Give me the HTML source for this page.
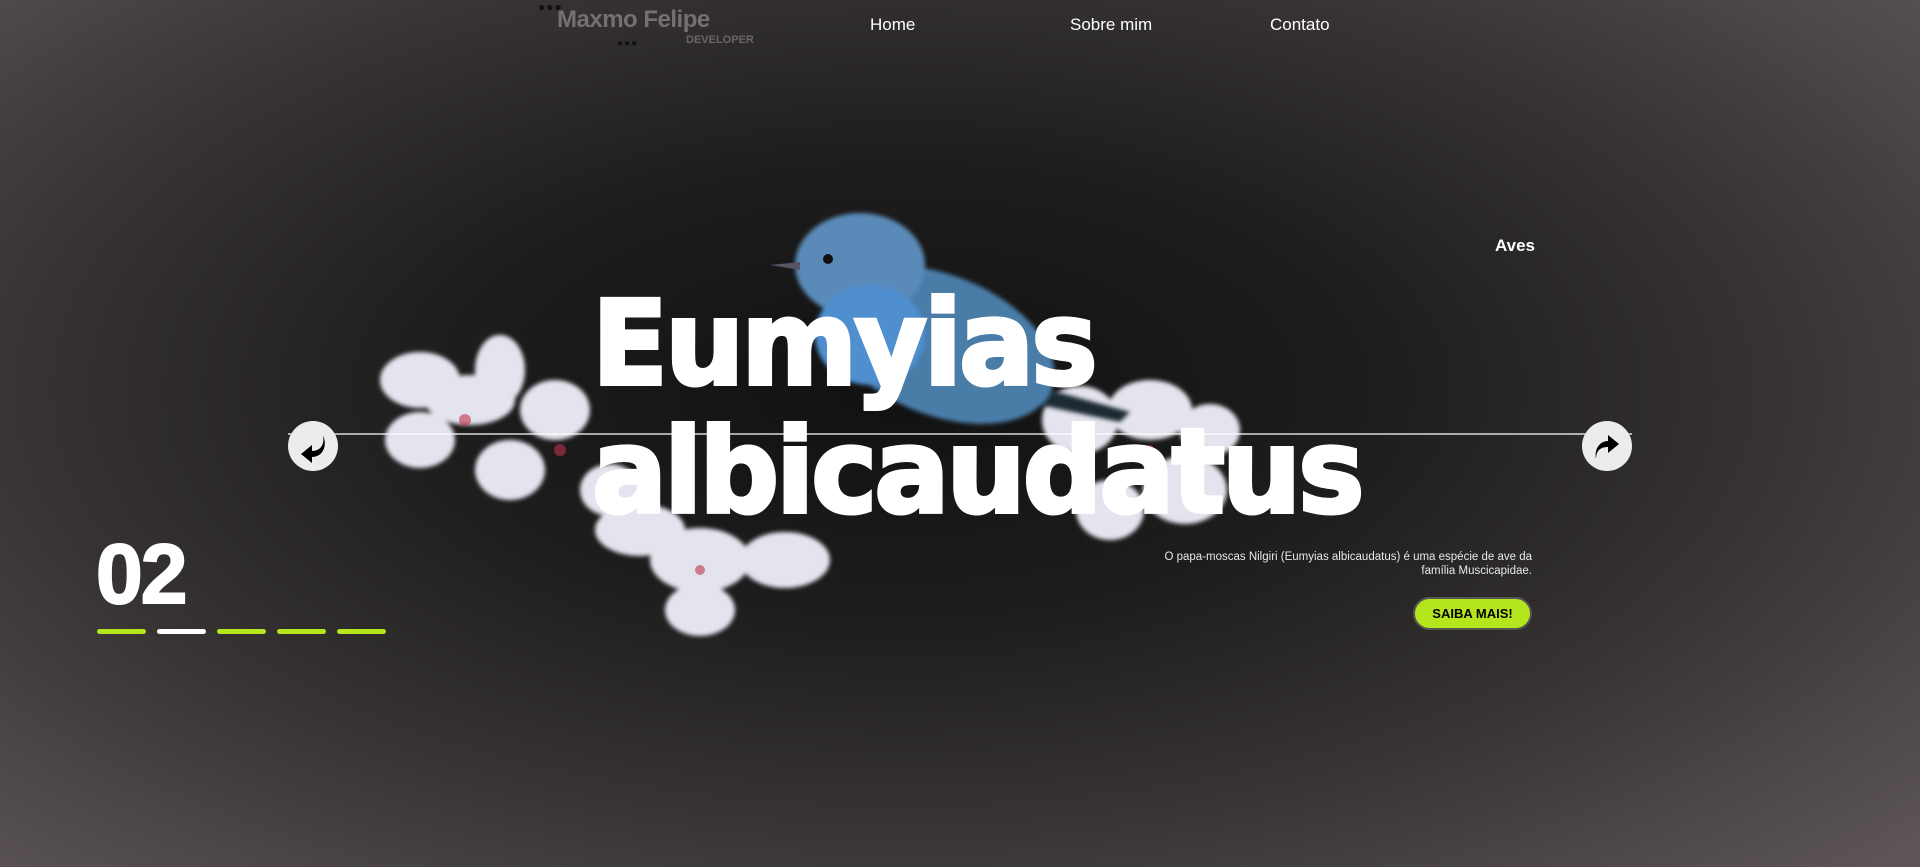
<!DOCTYPE html>
<html><head><meta charset="utf-8"><style>
*{margin:0;padding:0;box-sizing:border-box}
html,body{width:1920px;height:867px;overflow:hidden}
body{position:relative;font-family:"Liberation Sans","DejaVu Sans",sans-serif;
background:radial-gradient(ellipse 72% 78% at 47% 45%,#111 0%,#1f1d1d 35%,#383434 65%,#5d5557 100%);color:#fff}
.a{position:absolute}
.nav{top:15px;font-size:17px;color:#fff}
.logo{left:557px;top:6px;font-size:24px;font-weight:bold;color:#747070;letter-spacing:-0.5px}
.dev{left:686px;top:34px;font-size:11px;font-weight:bold;color:#6a6666}
.title{left:592px;top:280px;font-size:117px;line-height:128px;letter-spacing:-3px;transform:scaleX(0.95);transform-origin:left top;white-space:nowrap;font-family:"DejaVu Sans","Liberation Sans",sans-serif;font-weight:bold;-webkit-text-stroke:4px #fff}
.circ{width:50px;height:50px;border-radius:50%;background:#ececec}
.bar{top:629px;width:49px;height:5px;border-radius:3px;background:#b5e61d}
</style></head><body>
<svg class="a" style="left:0;top:0" width="1920" height="867">
<defs><filter id="b"><feGaussianBlur stdDeviation="2"/></filter></defs>
<g filter="url(#b)" fill="#e4e4ee">
<ellipse cx="420" cy="380" rx="40" ry="28"/><ellipse cx="470" cy="400" rx="45" ry="25"/><ellipse cx="420" cy="440" rx="35" ry="28"/>
<ellipse cx="500" cy="370" rx="25" ry="35"/><ellipse cx="555" cy="410" rx="35" ry="30"/><ellipse cx="510" cy="470" rx="35" ry="30"/>
<ellipse cx="640" cy="530" rx="45" ry="26"/><ellipse cx="700" cy="560" rx="50" ry="32"/><ellipse cx="785" cy="560" rx="45" ry="28"/>
<ellipse cx="700" cy="610" rx="35" ry="26"/><ellipse cx="610" cy="490" rx="30" ry="26"/>
<ellipse cx="1080" cy="420" rx="38" ry="34"/><ellipse cx="1150" cy="410" rx="42" ry="30"/><ellipse cx="1185" cy="490" rx="42" ry="34"/>
<ellipse cx="1110" cy="510" rx="34" ry="30"/><ellipse cx="1210" cy="430" rx="30" ry="26"/>
</g>
<g fill="#c0304a" opacity=".6"><circle cx="465" cy="420" r="6"/><circle cx="560" cy="450" r="6"/><circle cx="700" cy="570" r="5"/><circle cx="1150" cy="450" r="5"/></g>
<g filter="url(#b)">
<path d="M1050 390 L1130 412 L1120 422 L1040 405 Z" fill="#1a2a33"/>
<ellipse cx="940" cy="345" rx="120" ry="70" fill="#4a7da8" transform="rotate(22 940 345)"/>
<ellipse cx="860" cy="265" rx="65" ry="52" fill="#5a8ab8"/>
<ellipse cx="870" cy="335" rx="55" ry="50" fill="#4f8fd0"/>
</g>
<path d="M770 265 L800 262 L800 270 Z" fill="#556"/>
<circle cx="828" cy="259" r="5" fill="#111"/>
<line x1="288" y1="434" x2="1632" y2="434" stroke="#fff" stroke-width="1.3"/>
</svg>
<div class="a" style="left:538px;top:0;font-size:12px;color:#111;letter-spacing:1px">●●●</div>
<div class="a" style="left:617px;top:38px;font-size:10px;color:#111;letter-spacing:1px">●●●</div>
<div class="a logo">Maxmo Felipe</div>
<div class="a dev">DEVELOPER</div>
<div class="a nav" style="left:870px">Home</div>
<div class="a nav" style="left:1070px">Sobre mim</div>
<div class="a nav" style="left:1270px">Contato</div>
<div class="a" style="left:1495px;top:236px;font-size:17px;font-weight:bold">Aves</div>
<div class="a title">Eumyias<br>albicaudatus</div>
<div class="a circ" style="left:288px;top:421px"><svg width="50" height="50" viewBox="0 0 50 50"><path d="M35 14 C37 24 32 30 24 30 L24 24 L13 33 L24 42 L24 36 C34 36 40 26 35 14Z" fill="#000"/></svg></div>
<div class="a circ" style="left:1582px;top:421px"><svg width="50" height="50" viewBox="0 0 50 50"><path d="M14 38 C12 28 18 20 26 20 L26 14 L37 23 L26 32 L26 26 C18 26 14 30 14 38Z" fill="#000"/></svg></div>
<div class="a" style="left:96px;top:526px;font-size:84px;font-weight:bold;letter-spacing:-2px;-webkit-text-stroke:2px #fff">02</div>
<div class="a bar" style="left:97px"></div>
<div class="a bar" style="left:157px;background:#fff"></div>
<div class="a bar" style="left:217px"></div>
<div class="a bar" style="left:277px"></div>
<div class="a bar" style="left:337px"></div>
<div class="a" style="left:1142px;width:390px;top:550px;font-size:11.5px;text-align:right;line-height:14px;color:#e8e8e8">O papa-moscas Nilgiri (Eumyias albicaudatus) é uma espécie de ave da família Muscicapidae.</div>
<div class="a" style="left:1413px;top:597px;width:119px;height:33px;border-radius:17px;background:#b5e61d;border:2px solid #555;color:#000;font-weight:bold;font-size:13px;text-align:center;line-height:29px">SAIBA MAIS!</div>
</body></html>
